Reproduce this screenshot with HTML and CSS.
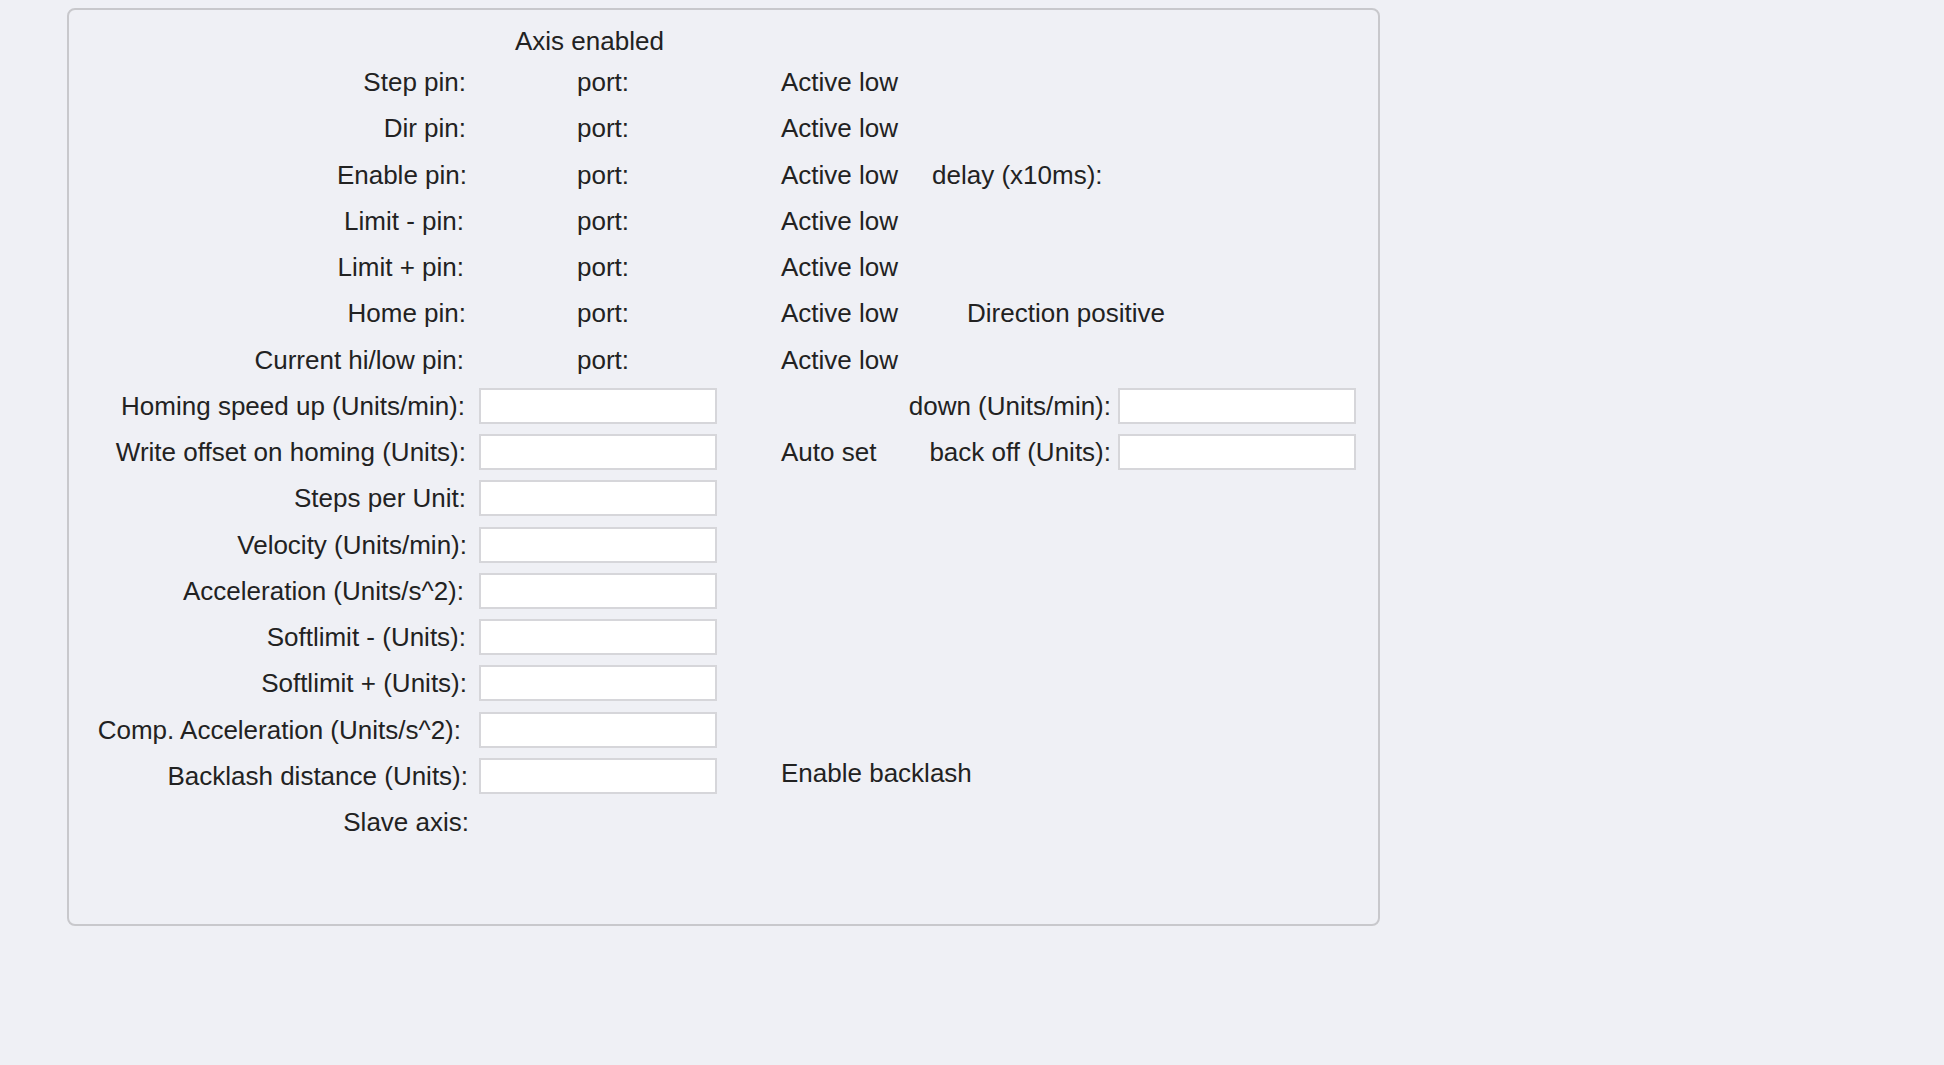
FILE: index.html
```html
<!DOCTYPE html>
<html>
<head>
<meta charset="utf-8">
<title>Axis settings</title>
<link rel="stylesheet" href="styles.css">
</head>
<body>
<div class="panel">
  <div class="row head">
    <div class="lbl"></div>
    <div class="mid axis">Axis enabled</div>
  </div>
  <div class="row">
    <div class="lbl"><span>Step pin:</span></div>
    <div class="mid port">port:</div>
    <div class="c3">Active low</div>
  </div>
  <div class="row">
    <div class="lbl"><span>Dir pin:</span></div>
    <div class="mid port">port:</div>
    <div class="c3">Active low</div>
  </div>
  <div class="row">
    <div class="lbl"><span class="nr1">Enable pin:</span></div>
    <div class="mid port">port:</div>
    <div class="c3">Active low<span class="delay">delay (x10ms):</span></div>
  </div>
  <div class="row">
    <div class="lbl"><span class="nl2">Limit - pin:</span></div>
    <div class="mid port">port:</div>
    <div class="c3">Active low</div>
  </div>
  <div class="row">
    <div class="lbl"><span class="nl2">Limit + pin:</span></div>
    <div class="mid port">port:</div>
    <div class="c3">Active low</div>
  </div>
  <div class="row">
    <div class="lbl"><span>Home pin:</span></div>
    <div class="mid port">port:</div>
    <div class="c3">Active low<span class="dirpos">Direction positive</span></div>
  </div>
  <div class="row">
    <div class="lbl"><span class="nl2">Current hi/low pin:</span></div>
    <div class="mid port">port:</div>
    <div class="c3">Active low</div>
  </div>
  <div class="row">
    <div class="lbl"><span class="nl1">Homing speed up (Units/min):</span></div>
    <div class="mid"><input class="field" type="text"></div>
    <div class="c3 split"><span class="rlbl">down (Units/min):</span></div>
    <input class="field rfield" type="text">
  </div>
  <div class="row">
    <div class="lbl"><span>Write offset on homing (Units):</span></div>
    <div class="mid"><input class="field" type="text"></div>
    <div class="c3 split"><span>Auto set</span><span class="rlbl">back off (Units):</span></div>
    <input class="field rfield" type="text">
  </div>
  <div class="row">
    <div class="lbl"><span>Steps per Unit:</span></div>
    <div class="mid"><input class="field" type="text"></div>
  </div>
  <div class="row">
    <div class="lbl"><span class="nr1">Velocity (Units/min):</span></div>
    <div class="mid"><input class="field" type="text"></div>
  </div>
  <div class="row">
    <div class="lbl"><span class="nl2">Acceleration (Units/s^2):</span></div>
    <div class="mid"><input class="field" type="text"></div>
  </div>
  <div class="row">
    <div class="lbl"><span>Softlimit - (Units):</span></div>
    <div class="mid"><input class="field" type="text"></div>
  </div>
  <div class="row">
    <div class="lbl"><span class="nr1">Softlimit + (Units):</span></div>
    <div class="mid"><input class="field" type="text"></div>
  </div>
  <div class="row">
    <div class="lbl"><span class="nl5">Comp. Acceleration (Units/s^2):</span></div>
    <div class="mid"><input class="field" type="text"></div>
  </div>
  <div class="row">
    <div class="lbl"><span class="nr2">Backlash distance (Units):</span></div>
    <div class="mid"><input class="field" type="text"></div>
    <div class="c3 lift">Enable backlash</div>
  </div>
  <div class="row">
    <div class="lbl"><span class="nr3">Slave axis:</span></div>
  </div>
</div>
</body>
</html>
```

FILE: styles.css
```css
html, body {
  margin: 0;
  padding: 0;
  background: #eff0f5;
}

body {
  font-family: "Liberation Sans", Arial, sans-serif;
  font-size: 26px;
  line-height: 30px;
  color: #222222;
  width: 1944px;
  height: 1065px;
}

.panel {
  box-sizing: border-box;
  margin: 8px 0 0 67px;
  width: 1313px;
  height: 918px;
  border: 2px solid #c8c8cc;
  border-radius: 8px;
  padding-top: 16px;
}

.row {
  display: flex;
  align-items: center;
  height: 46.25px;
  white-space: nowrap;
}

.row.head {
  height: 33px;
  align-items: flex-start;
}

.lbl {
  box-sizing: border-box;
  width: 397px;
  flex: none;
  text-align: right;
}

.nl1 { margin-right: 1px; }
.nl2 { margin-right: 2px; }
.nl5 { margin-right: 5px; }
.nr1 { margin-right: -1px; }
.nr2 { margin-right: -2px; }
.nr3 { margin-right: -3px; }

.mid {
  box-sizing: border-box;
  width: 238px;
  margin-left: 13px;
  flex: none;
  display: flex;
  align-items: center;
}

.axis {
  padding-left: 36px;
}

.port {
  padding-left: 98px;
}

.c3 {
  margin-left: 64px;
  flex: none;
  display: flex;
  align-items: center;
}

.split {
  width: 330px;
}

.rlbl {
  margin-left: auto;
}

.delay {
  margin-left: 34px;
}

.dirpos {
  margin-left: 69px;
}

.lift {
  margin-bottom: 6px;
}

.field {
  box-sizing: border-box;
  width: 238px;
  height: 36px;
  margin: 0;
  border: 2px solid #d6d6da;
  border-radius: 0;
  background: #ffffff;
  padding: 0 6px;
  font: inherit;
  outline: none;
}

.rfield {
  margin-left: 7px;
  flex: none;
}
```
